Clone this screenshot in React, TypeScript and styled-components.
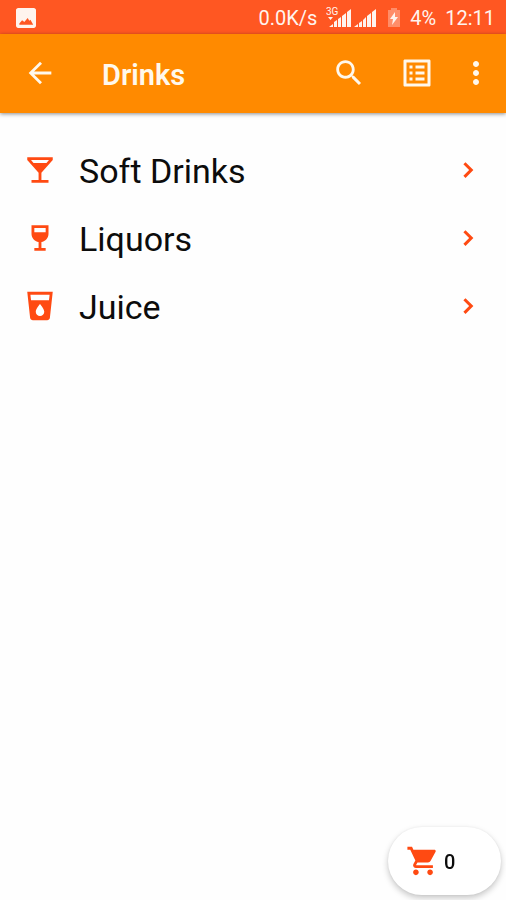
import React from "react";
import styled, { createGlobalStyle } from "styled-components";

const GlobalStyle = createGlobalStyle`
  *, *::before, *::after { box-sizing: border-box; }
  body {
    margin: 0;
    background: #fefefe;
    color: #0c0c0c;
    font-family: Roboto, "Liberation Sans", sans-serif;
  }
  button { font: inherit; color: inherit; }
`;

const Screen = styled.div`
  display: flex;
  flex-direction: column;
  min-height: 100vh;
`;

const StatusBar = styled.div`
  display: flex;
  align-items: center;
  justify-content: space-between;
  height: 34px;
  padding: 2px 11px 0 16px;
  background: #ff5722;
  color: #fff4ee;
  font-size: 20px;
  line-height: 24px;
`;

const StatusGroup = styled.div`
  display: flex;
  align-items: center;
  gap: 9px;
  white-space: nowrap;
`;

const AppBar = styled.header`
  display: flex;
  align-items: center;
  height: 79px;
  padding: 0 21px 2px 22px;
  background: #ff8a00;
  color: #fff8ec;
  box-shadow: 0 1px 4px rgba(0, 0, 0, 0.45);
`;

const Title = styled.h1`
  flex: 1;
  margin: 0;
  padding: 4px 0 0 44px;
  font-size: 29px;
  line-height: 36px;
  font-weight: 600;
`;

const Actions = styled.div`
  display: flex;
  gap: 32px;
`;

const IconButton = styled.button<{ $narrow?: boolean }>`
  display: flex;
  align-items: center;
  justify-content: center;
  width: ${(p) => (p.$narrow ? 18 : 36)}px;
  height: 36px;
  padding: 0;
  border: 0;
  background: none;
  cursor: pointer;
`;

const Icon = styled.svg<{ $size: number; $width?: number }>`
  display: block;
  flex: none;
  width: ${(p) => p.$width ?? p.$size}px;
  height: ${(p) => p.$size}px;
  fill: currentColor;
`;

const Menu = styled.ul`
  flex: 1;
  margin: 0;
  padding: 23px 0 0;
  list-style: none;
`;

const MenuRow = styled.button`
  display: flex;
  align-items: center;
  width: 100%;
  height: 68px;
  padding: 0 23px;
  border: 0;
  background: none;
  text-align: left;
  color: #ff4a12;
  cursor: pointer;
`;

const MenuLabel = styled.span`
  flex: 1;
  padding: 1px 0 0 22px;
  color: #0c0c0c;
  font-size: 34px;
  line-height: 40px;
`;

const CartButton = styled.button`
  position: fixed;
  right: 5px;
  bottom: 5px;
  display: flex;
  align-items: center;
  gap: 4px;
  width: 113px;
  height: 68px;
  padding: 0 18px;
  border: 0;
  border-radius: 34px;
  background: #fff;
  color: #ff4a12;
  box-shadow: 0 3px 6px rgba(0, 0, 0, 0.22), 0 0 3px rgba(0, 0, 0, 0.06);
  cursor: pointer;
`;

const CartCount = styled.span`
  padding-top: 2px;
  color: #0c0c0c;
  font-size: 20px;
  line-height: 24px;
  font-weight: 500;
`;

const paths = {
  image:
    "M21 19V5c0-1.100-.9-2-2-2H5c-1.100 0-2 .9-2 2v14c0 1.100.9 2 2 2h14c1.100 0 2-.9 2-2zM6 18l0-1 2.500-3 2 1.500 3-3.500 1.500 2.500 1-1 2.500 4.500z",
  back: "M20 11H7.830l5.590-5.590L12 4l-8 8 8 8 1.410-1.410L7.830 13H20v-2z",
  search:
    "M15.500 14h-.790l-.280-.270C15.410 12.590 16 11.110 16 9.500 16 5.910 13.090 3 9.500 3S3 5.910 3 9.500 5.910 16 9.500 16c1.610 0 3.090-.590 4.230-1.570l.270.280v.790l5 4.990L20.490 19l-4.990-5zm-6 0C7.010 14 5 11.990 5 9.500S7.010 5 9.500 5 14 7.010 14 9.500 11.990 14 9.500 14z",
  list: "M19 5v14H5V5h14m1.100-2H3.900c-.5 0-.9.4-.9.9v16.200c0 .4.4.9.9.9h16.200c.4 0 .9-.5.9-.9V3.900c0-.5-.5-.9-.9-.9zM11 7h6v2h-6V7zm0 4h6v2h-6v-2zm0 4h6v2h-6zM7 7h2v2H7zm0 4h2v2H7zm0 4h2v2H7z",
  more: "M12 8c1.100 0 2-.9 2-2s-.9-2-2-2-2 .9-2 2 .9 2 2 2zm0 2c-1.100 0-2 .9-2 2s.9 2 2 2 2-.9 2-2-.9-2-2-2zm0 6c-1.100 0-2 .9-2 2s.9 2 2 2 2-.9 2-2-.9-2-2-2z",
  cocktail: "M21 5V3H3v2l8 9v5H6v2h12v-2h-5v-5l8-9zM7.430 7L5.660 5h12.690l-1.780 2H7.430z",
  wine: "M6 3v6c0 2.970 2.160 5.430 5 5.910V19H8v2h8v-2h-3v-4.090c2.840-.480 5-2.940 5-5.910V3H6zm10 5H8V5h8v3z",
  juice:
    "M3 2l2.010 18.230C5.130 21.230 5.970 22 7 22h10c1.030 0 1.870-.770 1.990-1.770L21 2H3zm9 17c-1.660 0-3-1.340-3-3 0-2 3-5.400 3-5.400s3 3.400 3 5.400c0 1.660-1.340 3-3 3zm6.330-11H5.670l-.440-4h13.550l-.450 4z",
  chevron: "M10 5.700L8.300 7.400 12.900 12l-4.600 4.600L10 18.300l6.300-6.300z",
  cart: "M7 18c-1.100 0-1.990.9-1.990 2S5.900 22 7 22s2-.9 2-2-.9-2-2-2zM1 2v2h2l3.600 7.590-1.350 2.450c-.160.280-.250.610-.250.960 0 1.100.9 2 2 2h12v-2H7.420c-.140 0-.250-.110-.250-.250l.030-.120.9-1.630h7.450c.750 0 1.410-.410 1.750-1.030l3.580-6.490c.080-.140.120-.310.120-.480 0-.550-.450-1-1-1H5.210l-.940-2H1zm16 16c-1.100 0-1.990.9-1.990 2s.890 2 1.990 2 2-.9 2-2-.9-2-2-2z",
};

type Glyph = keyof typeof paths;

function Symbol({ name, size, crop, width }: { name: Glyph; size: number; crop?: string; width?: number }) {
  return (
    <Icon $size={size} $width={width} viewBox={crop ?? "0 0 24 24"} aria-hidden="true">
      <path d={paths[name]} fillRule="evenodd" />
    </Icon>
  );
}

function Signal() {
  return (
    <Icon $size={24} $width={52} viewBox="0 0 52 24" role="img" aria-label="3G signal">
      <text x="0" y="9" fontSize="10" fontFamily="Roboto, sans-serif">3G</text>
      <path d="M2 11h5l-2.500 3zM3 21l4-3v3zM8 21v-5l3-2v7zM12 21v-8l3-2v10zM16 21V10l4-3v14zM21 21V6l4-3v18z" />
      <path d="M28 21l4-3v3zM33 21v-4l3-2v6zM37 21v-7l3-3v10zM41 21V10l4-3v14zM46 21V6l4-3v18z" />
    </Icon>
  );
}

function Battery() {
  return (
    <Icon $size={20} $width={14} viewBox="0 0 14 20" role="img" aria-label="Battery charging">
      <path opacity="0.35" d="M4 0h6v2h3v17H1V2h3z" />
      <path d="M8 4L3 11h3l-1 6 6-8H8z" />
    </Icon>
  );
}

const categories: { label: string; icon: Glyph }[] = [
  { label: "Soft Drinks", icon: "cocktail" },
  { label: "Liquors", icon: "wine" },
  { label: "Juice", icon: "juice" },
];

export default function App() {
  return (
    <Screen>
      <GlobalStyle />
      <StatusBar>
        <Symbol name="image" size={20} crop="3 3 18 18" />
        <StatusGroup>
          <span>0.0K/s</span>
          <Signal />
          <Battery />
          <span>4%</span>
          <span>12:11</span>
        </StatusGroup>
      </StatusBar>
      <AppBar>
        <IconButton aria-label="Back">
          <Symbol name="back" size={34} />
        </IconButton>
        <Title>Drinks</Title>
        <Actions>
          <IconButton aria-label="Search">
            <Symbol name="search" size={34} />
          </IconButton>
          <IconButton aria-label="Orders">
            <Symbol name="list" size={36} />
          </IconButton>
          <IconButton aria-label="More options" $narrow>
            <Symbol name="more" size={36} width={18} crop="6 0 12 24" />
          </IconButton>
        </Actions>
      </AppBar>
      <Menu>
        {categories.map(({ label, icon }) => (
          <li key={label}>
            <MenuRow>
              <Symbol name={icon} size={34} />
              <MenuLabel>{label}</MenuLabel>
              <Symbol name="chevron" size={30} />
            </MenuRow>
          </li>
        ))}
      </Menu>
      <CartButton aria-label="Cart, 0 items">
        <Symbol name="cart" size={34} />
        <CartCount>0</CartCount>
      </CartButton>
    </Screen>
  );
}
